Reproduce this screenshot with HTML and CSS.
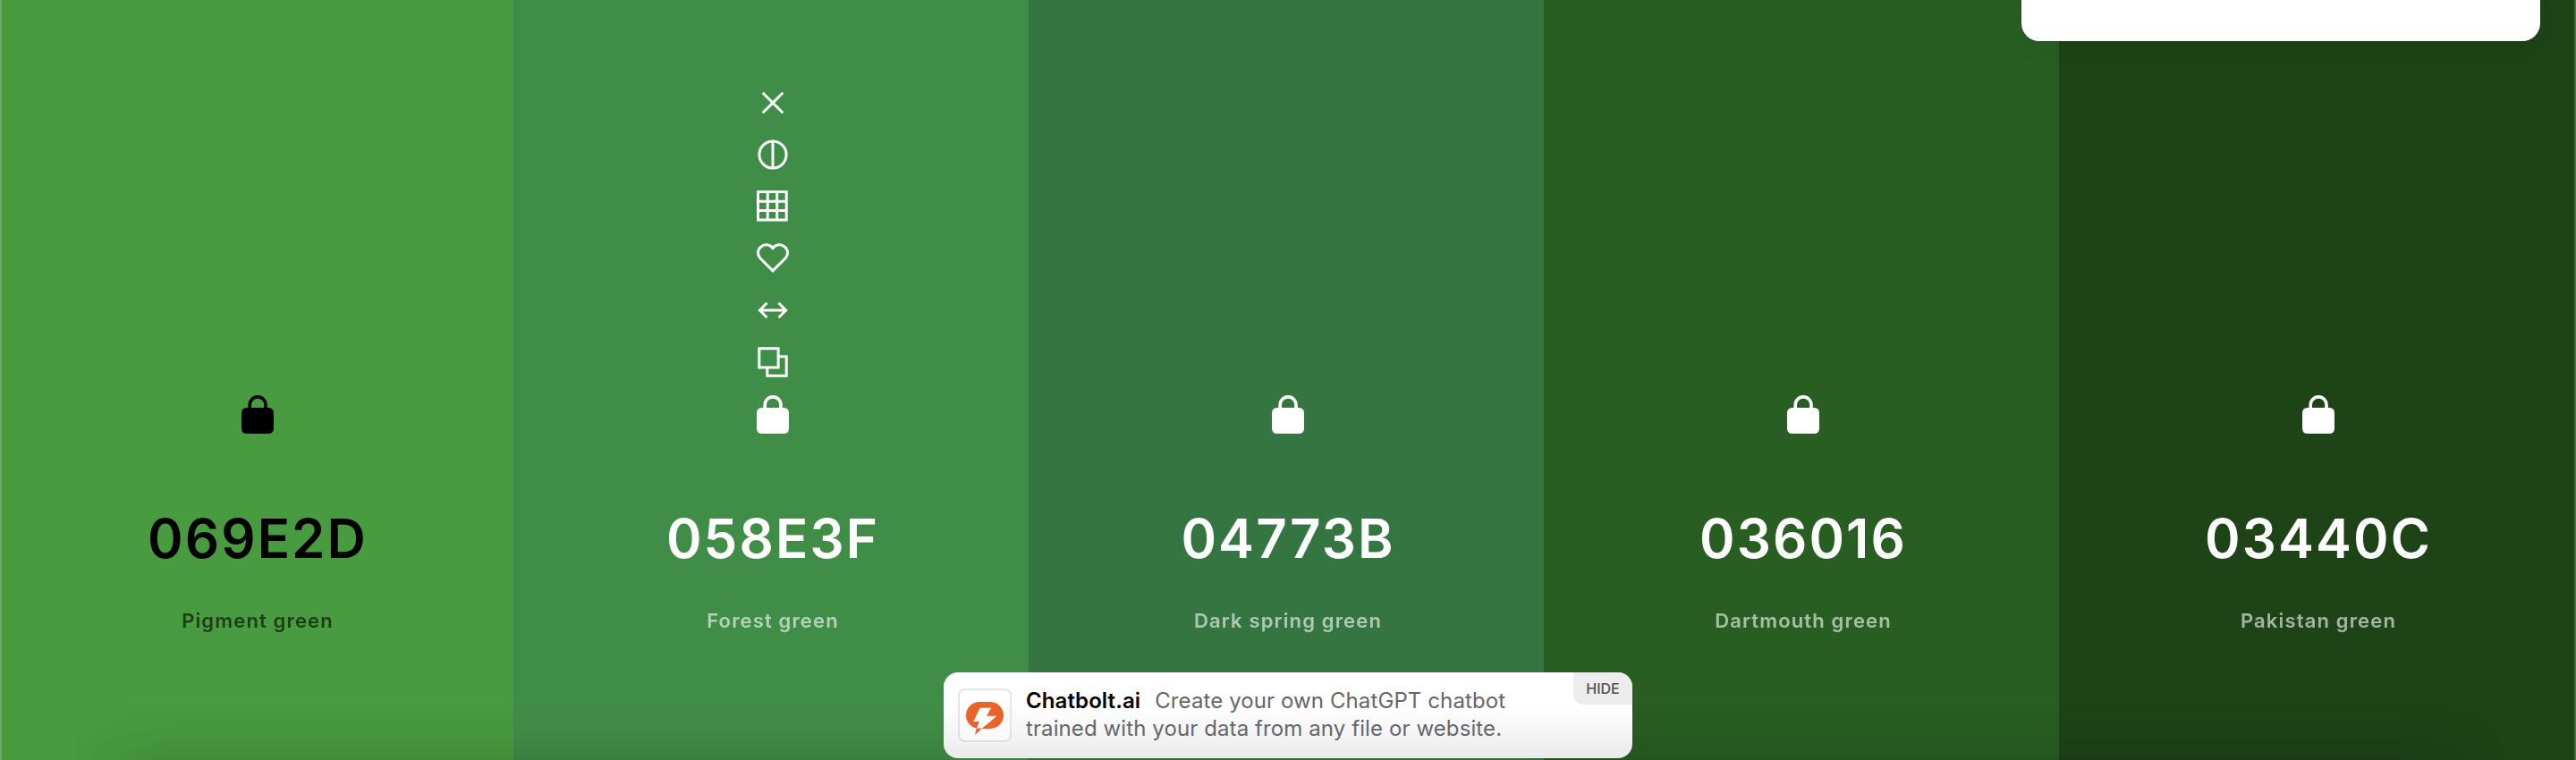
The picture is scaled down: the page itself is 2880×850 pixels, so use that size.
FILE: index.html
```
<!DOCTYPE html>
<html lang="en">
<head>
<meta charset="utf-8">
<title>Palette</title>
<link rel="stylesheet" href="styles.css">
</head>
<body>
<svg class="defs" width="0" height="0" aria-hidden="true">
  <symbol id="lock" viewBox="0 0 36 44">
    <rect y="14" width="36" height="29" rx="5.400" fill="currentColor"/>
    <path d="M9.200 16v-5.200a8.900 8.900 0 0 1 17.800 0V16" fill="none" stroke="currentColor" stroke-width="3.600"/>
  </symbol>
</svg>
<main class="palette">
  <section class="color pigment">
    <svg class="lock"><use href="#lock"/></svg>
    <h2 class="hex">069E2D</h2>
    <p class="name">Pigment green</p>
  </section>
  <section class="color forest">
    <div class="tools">
      <svg class="tool" viewBox="0 0 40 40"><path d="M8.700 8.700l22.600 22.600M31.300 8.700l-22.600 22.600"/></svg>
      <svg class="tool" viewBox="0 0 40 40"><circle cx="20" cy="20" r="15.100"/><path d="M20 5v30"/></svg>
      <svg class="tool" viewBox="0 0 40 40"><path d="M3.500 3.500h31.700v31.400h-31.700zM14.200 3.500v31.400M24.700 3.500v31.400M3.500 14.200h31.700M3.500 24.500h31.700"/></svg>
      <svg class="tool" viewBox="0 0 40 40"><path d="M20 33.900L6.600 20.500C2.600 16.500 2.500 10.800 6.300 7.300C10.300 3.700 16.700 4 20 8.500C23.300 4 29.700 3.700 33.700 7.300C37.500 10.800 37.400 16.500 33.400 20.500Z"/></svg>
      <svg class="tool" viewBox="0 0 40 40"><path d="M5.500 20h29M13.500 11.800L5.400 20l8.100 8.200M26.500 11.800L34.600 20l-8.100 8.200"/></svg>
      <svg class="tool" viewBox="0 0 40 40"><path d="M4.800 4.800h21.300v21.100h-21.300zM26.100 13.800h9.100v21.400h-21.400v-9.300"/></svg>
    </div>
    <svg class="lock"><use href="#lock"/></svg>
    <h2 class="hex">058E3F</h2>
    <p class="name">Forest green</p>
  </section>
  <section class="color spring">
    <svg class="lock"><use href="#lock"/></svg>
    <h2 class="hex">04773B</h2>
    <p class="name">Dark spring green</p>
  </section>
  <section class="color dartmouth">
    <svg class="lock"><use href="#lock"/></svg>
    <h2 class="hex">036016</h2>
    <p class="name">Dartmouth green</p>
  </section>
  <section class="color pakistan">
    <svg class="lock"><use href="#lock"/></svg>
    <h2 class="hex">03440C</h2>
    <p class="name">Pakistan green</p>
  </section>
</main>
<div class="menu-panel"></div>
<div class="bottom-shade"></div>
<aside class="ad">
  <div class="ad-logo">
    <svg viewBox="0 0 60 60"><path fill="#ec622b" d="M24 15h12a15 15 0 0 1 0 30H24a15 15 0 0 1 0-30z"/><path fill="#fff" d="M24.700 21.700H37l-5 9h11.500L26 45.500h-5.500L24 37h-6.700z"/><path fill="#ec622b" d="M20.700 44.500H27L19 52z"/></svg>
  </div>
  <p class="ad-text"><strong>Chatbolt.ai</strong>Create your own ChatGPT chatbot<br>trained with your data from any file or website.</p>
  <button class="ad-hide">HIDE</button>
</aside>
</body>
</html>
```
FILE: styles.css
```
body {
  margin: 0;
  height: 850px;
  position: relative;
  overflow: hidden;
  font-family: Inter, sans-serif;
}
.defs { position: absolute; }
.palette {
  display: grid;
  grid-template-columns: 574px 576px 576px 576px 578px;
  height: 850px;
}
.color {
  display: flex;
  flex-direction: column;
  align-items: center;
  justify-content: flex-end;
  box-sizing: border-box;
  padding: 0 0 142px 4px;
  color: #fff;
}
.pigment { background: #489b3e; border-left: 2px solid #6dae65; padding-left: 0; color: #000; }
.forest { background: #408d48; }
.spring { background: #357541; }
.dartmouth { background: #285e22; }
.pakistan { background: #1d4317; border-right: 2px solid #4a6945; }
.tools { display: flex; flex-direction: column; gap: 18px; margin-bottom: 17px; }
.tool { display: block; width: 40px; height: 40px; fill: none; stroke: currentColor; stroke-width: 3; }
.lock { display: block; flex: none; width: 36px; height: 44px; }
.hex {
  margin: 76px 0 38px;
  font-size: 60px;
  font-weight: 600;
  letter-spacing: 2.1px;
  line-height: 80px;
}
.name {
  margin: 0;
  font-size: 22px;
  font-weight: 600;
  letter-spacing: 1.15px;
  line-height: 28px;
  opacity: .6;
}
.menu-panel {
  position: absolute;
  top: 0;
  left: 2260px;
  width: 580px;
  height: 46px;
  border-radius: 0 0 20px 20px;
  background: #fff;
  box-shadow: 0 0 2px rgba(0,0,0,.25), 0 8px 30px rgba(0,0,0,.04);
}
.bottom-shade {
  position: absolute;
  left: 80px;
  right: 80px;
  bottom: 0;
  height: 64px;
  background: linear-gradient(transparent, rgba(0,0,0,.025) 50%, rgba(0,0,0,.09));
  -webkit-mask-image: linear-gradient(90deg, transparent, #000 120px, #000 calc(100% - 120px), transparent);
  mask-image: linear-gradient(90deg, transparent, #000 120px, #000 calc(100% - 120px), transparent);
}
.ad {
  position: absolute;
  left: 1055px;
  top: 752px;
  width: 770px;
  height: 96px;
  box-sizing: border-box;
  padding-left: 16px;
  display: flex;
  align-items: center;
  border-radius: 16px;
  overflow: hidden;
  background: linear-gradient(#fff 40%, #ebebeb);
}
.ad-logo {
  box-sizing: border-box;
  width: 60px;
  height: 60px;
  border: 2px solid rgba(0,0,0,.1);
  border-radius: 8px;
  background: rgba(255,255,255,.5);
}
.ad-logo svg { display: block; width: 60px; height: 60px; margin: -2px; }
.ad-text {
  margin: 0 0 2px 16px;
  color: #65666b;
  font-size: 24px;
  letter-spacing: .1px;
  line-height: 31px;
  white-space: nowrap;
}
.ad-text strong { margin-right: 16px; font-weight: 600; color: #000; }
.ad-hide {
  position: absolute;
  top: 0;
  right: 0;
  width: 66px;
  height: 36px;
  padding: 0;
  border: 0;
  border-bottom-left-radius: 10px;
  background: #ededee;
  color: #4b4f58;
  font: 500 16px/36px Inter, sans-serif;
}
```
